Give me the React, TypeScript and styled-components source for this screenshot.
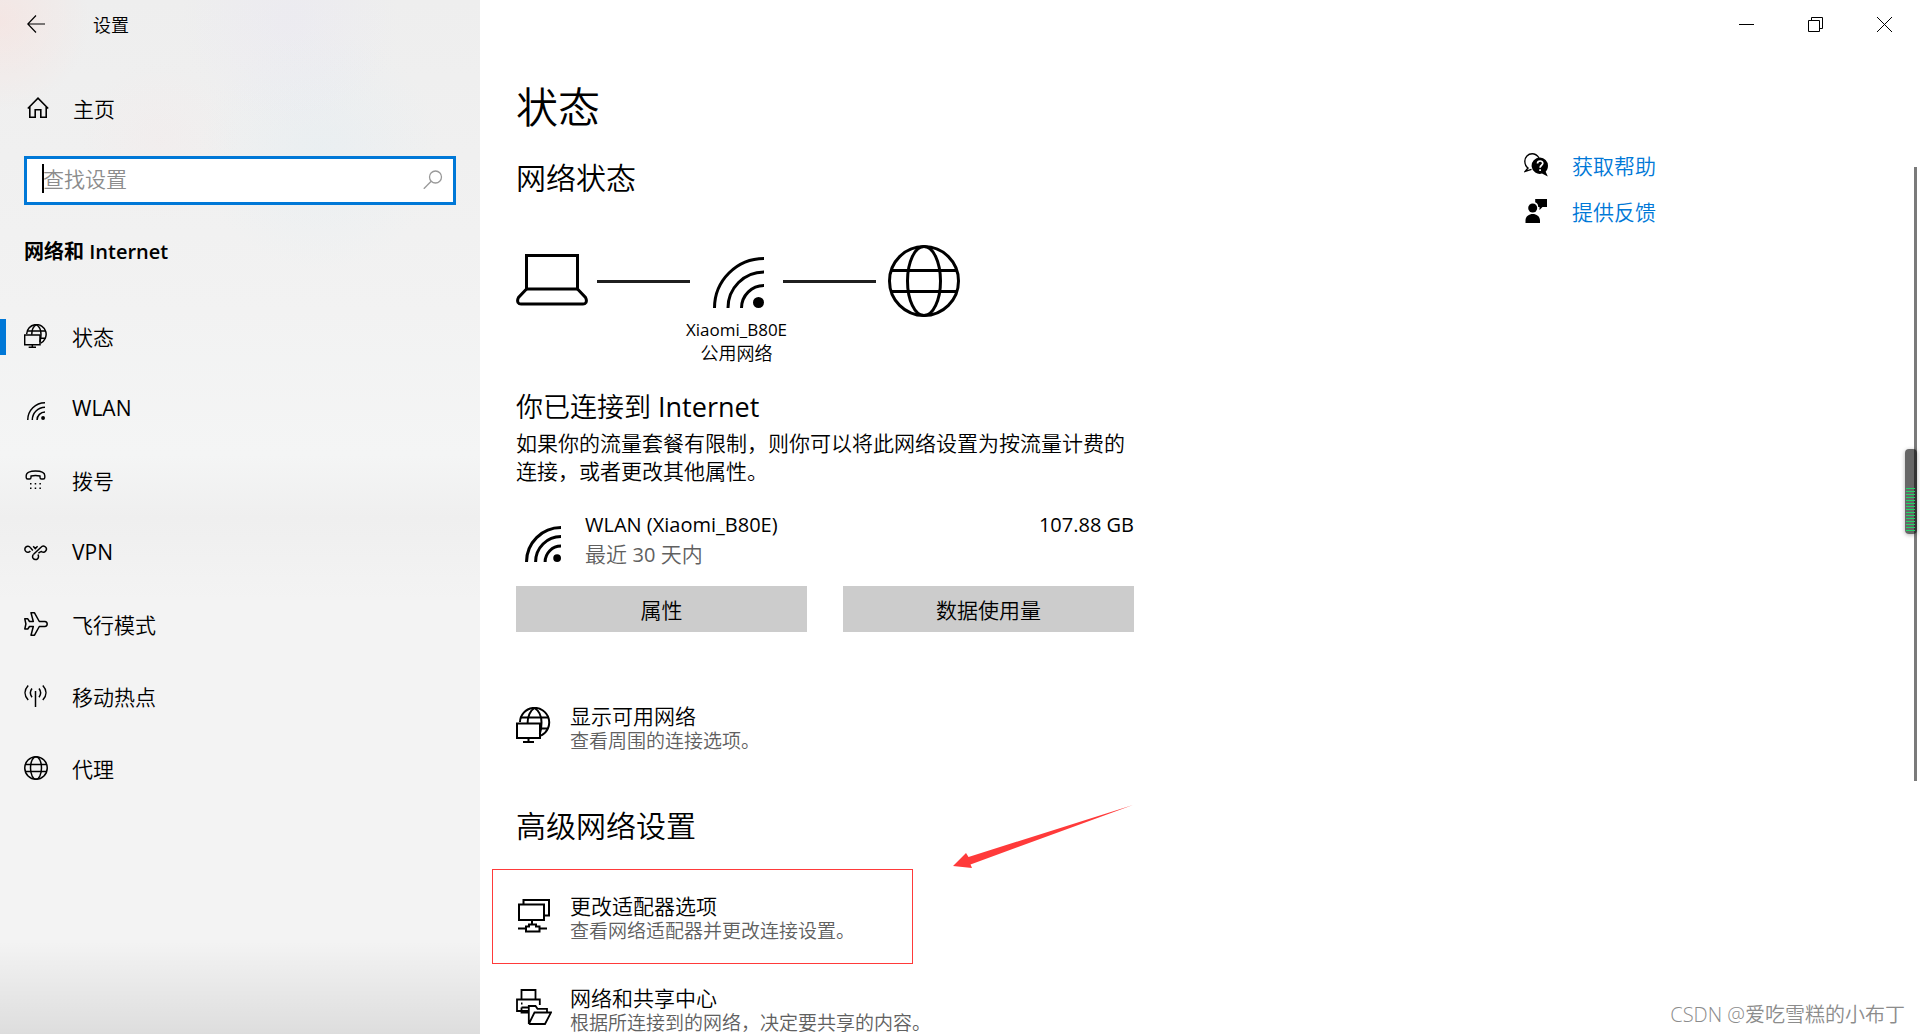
import React from "react";
import styled, { createGlobalStyle } from "styled-components";

const GlobalStyle = createGlobalStyle`
  *, *::before, *::after { box-sizing: border-box; }
  html, body, #root { height: 100%; }
  body {
    margin: 0;
    overflow: hidden;
    background: #fff;
    color: #000;
    font-family: "Open Sans", "Noto Sans CJK SC", sans-serif;
    font-size: 21px;
    font-weight: 350;
  }
  h1, h2, h3, p, ul { margin: 0; padding: 0; font-weight: inherit; }
  ul { list-style: none; }
  a { color: inherit; text-decoration: none; }
  button, input { font: inherit; color: inherit; border: 0; padding: 0; background: none; }
  svg { display: block; flex: none; }
`;

const accent = "#0078d7";
const muted = "#606060";

/* ---------- layout ---------- */

const Window = styled.div`
  position: relative;
  display: grid;
  grid-template-columns: 480px minmax(0, 1fr);
  height: 100vh;
  overflow: hidden;
`;

const Sidebar = styled.aside`
  display: flex;
  flex-direction: column;
  background:
    linear-gradient(to bottom, transparent 91%, rgba(0, 0, 0, 0.04) 95%, rgba(0, 0, 0, 0.09) 100%),
    radial-gradient(circle at 0 20px, rgba(255, 215, 208, 0.35), transparent 90px),
    radial-gradient(circle at 290px 20px, rgba(228, 224, 248, 0.22), transparent 110px),
    radial-gradient(circle at 320px 150px, rgba(220, 236, 244, 0.3), transparent 120px),
    radial-gradient(circle at 160px 140px, rgba(248, 228, 228, 0.2), transparent 80px),
    linear-gradient(to bottom, #eeeeee 0, #f2f2f2 30%, #f4f5f5 44%, #efefef 50%, #f3f3f3 58%, #f3f3f3 100%);
`;

const SideHeader = styled.header`
  display: flex;
  align-items: center;
  gap: 48px;
  height: 48px;
  padding-left: 27px;
  font-size: 18px;
`;

const IconButton = styled.button`
  display: flex;
  align-items: center;
  justify-content: center;
`;

const HomeLink = styled.a`
  display: flex;
  align-items: center;
  gap: 24px;
  height: 48px;
  margin-top: 36px;
  padding-left: 27px;
`;

const SearchBox = styled.label`
  position: relative;
  display: flex;
  align-items: center;
  height: 49px;
  margin: 24px 24px 0;
  padding: 0 10px 3px 16px;
  border: 3px solid ${accent};
  background: #fff;
`;

const SearchInput = styled.input`
  flex: 1;
  min-width: 0;
  outline: none;
  &::placeholder { color: #8c8c8c; opacity: 1; }
`;

const Caret = styled.span`
  position: absolute;
  left: 15px;
  top: 5px;
  width: 2px;
  height: 29px;
  background: #000;
`;

const GroupTitle = styled.h2`
  margin: 32px 24px 33px;
  font-weight: 600;
  font-size: 20px;
  line-height: 30px;
`;

const NavLink = styled.a<{ $active?: boolean }>`
  display: flex;
  align-items: center;
  gap: 24px;
  height: 72px;
  padding-left: 24px;
  background: ${(p) => (p.$active ? `linear-gradient(${accent}, ${accent}) 0 19px / 6px 36px no-repeat` : "none")};
`;

const NavIcon = styled.span`
  display: flex;
  align-items: flex-end;
  justify-content: center;
  width: 24px;
  height: 24px;
`;

/* Western text is set a step heavier than the Chinese text beside it. */
const Latin = styled.span<{ $size?: number }>`
  font-size: ${(p) => (p.$size ? `${p.$size}px` : "inherit")};
  font-weight: 400;
  line-height: 1;
`;

const Main = styled.main`
  min-width: 0;
  padding-left: 36px;
`;

const WindowButtons = styled.div`
  display: flex;
  justify-content: flex-end;
  height: 48px;
  padding-right: 1px;
  ${IconButton} { width: 69px; }
`;

const Columns = styled.div`
  display: grid;
  grid-template-columns: minmax(0, 1008px) 1fr;
`;

const Content = styled.div`
  max-width: 618px;
  padding-top: 31px;
`;

const PageTitle = styled.h1`
  font-size: 42px;
  line-height: 56px;
`;

const SectionTitle = styled.h2<{ $space: number }>`
  margin-top: ${(p) => p.$space}px;
  font-size: 30px;
  line-height: 40px;
`;

const Diagram = styled.div`
  display: grid;
  grid-template-columns: 81px 93px 93px 93px 84px;
  grid-template-rows: 72px 48px;
  align-items: center;
  margin-top: 47px;
`;

const Wire = styled.span`
  height: 3px;
  background: #1f1f1f;
`;

const DiagramEnd = styled.span`
  display: flex;
  justify-content: flex-end;
`;

const NodeIcon = styled.span`
  display: flex;
  justify-content: center;
  padding: 3px 0 0 4px;
`;

const NodeLabel = styled.p`
  grid-column: 3;
  justify-self: center;
  font-size: 18px;
  line-height: 24px;
  text-align: center;
  white-space: nowrap;
`;

const Connected = styled.h3`
  margin-top: 24px;
  font-size: 27px;
  line-height: 36px;
`;

const Note = styled.p`
  margin-top: 4px;
  line-height: 28px;
`;

const Usage = styled.div`
  display: flex;
  align-items: flex-end;
  margin-top: 24px;
  padding-left: 9px;
  line-height: 30px;
  > svg { margin-bottom: 7px; }
`;

const UsageText = styled.div`
  flex: 1;
  padding-left: 24px;
`;

const UsageAmount = styled.p`
  align-self: flex-start;
`;

const Muted = styled.p`
  color: ${muted};
`;

const Actions = styled.div`
  display: grid;
  grid-template-columns: 1fr 1fr;
  gap: 36px;
  margin-top: 17px;
`;

const ActionButton = styled.button`
  height: 46px;
  background: #ccc;
`;

const Option = styled.a<{ $space: number }>`
  position: relative;
  display: flex;
  gap: 18px;
  margin-top: ${(p) => p.$space}px;
  > svg { margin-top: 5px; }
`;

const OptionName = styled.p`
  line-height: 28px;
`;

const OptionHint = styled.p`
  color: ${muted};
  font-size: 19px;
  line-height: 22px;
  white-space: nowrap;
`;

const Highlight = styled.span`
  position: absolute;
  inset: -23px auto -22px -24px;
  width: 421px;
  border: 1px solid #ff3a3a;
`;

const Pointer = styled.svg`
  position: absolute;
  left: 437px;
  top: -92px;
`;

const Help = styled.nav`
  padding-top: 94px;
  color: ${accent};
`;

const HelpLink = styled.a`
  display: flex;
  align-items: center;
  gap: 24px;
  height: 46px;
  svg { color: #000; }
`;

const ScrollThumb = styled.span`
  position: absolute;
  top: 167px;
  right: 3px;
  width: 3px;
  height: 614px;
  background: #7a7a7a;
`;

const Meter = styled.span`
  position: absolute;
  top: 449px;
  right: 3px;
  width: 12px;
  height: 85px;
  padding: 39px 2px 3px 1px;
  border-radius: 4px;
  background: linear-gradient(to right, #666 9px, #333 9px);
  box-shadow: 0 1px 4px rgba(0, 0, 0, 0.3);
  &::after {
    content: "";
    display: block;
    height: 100%;
    background: repeating-linear-gradient(to bottom, #22d366 0 1px, transparent 1px 3px);
  }
`;

const Watermark = styled.span`
  position: absolute;
  right: 15px;
  bottom: 4px;
  color: #8c8c8c;
  font-size: 20px;
  line-height: 30px;
  text-shadow: 1px 1px 0 #fff;
`;

/* ---------- icons ---------- */

type Drawn = { size: number; stroke: number };

const Globe = ({ size, stroke }: Drawn) => {
  const r = 36 - (stroke * 36) / size;
  return (
    <svg width={size} height={size} viewBox="0 0 72 72" fill="none" stroke="currentColor" strokeWidth={(stroke * 72) / size}>
      <circle cx="36" cy="36" r={r} />
      <ellipse cx="36" cy="36" rx="16.5" ry={r} />
      <path d="M3 25.5H69M3 46.5H69" />
    </svg>
  );
};

const Wifi = ({ size, stroke }: Drawn) => {
  const w = (stroke * 51) / size;
  const o = 51 - w / 2;
  return (
    <svg width={size} height={size} viewBox="0 0 51 51" fill="none" stroke="currentColor" strokeWidth={w}>
      <path d={`M${51 - o} 51A${o} ${o} 0 0 1 51 ${51 - o}M15 51A36 36 0 0 1 51 15M28.5 51A22.5 22.5 0 0 1 51 28.5`} />
      <circle cx="45.5" cy="45.5" r="5.5" fill="currentColor" stroke="none" />
    </svg>
  );
};

const Status = ({ size, stroke }: Drawn) => (
  <svg width={size} height={size} viewBox="0 0 36 36" fill="none" stroke="currentColor" strokeWidth={(stroke * 36) / size}>
    <path d="M4 15A14.6 14.6 0 1 1 25 28.6" />
    <path d="M11.6 16C11.6 10 14 3.5 18.5 1C23.5 4 25.5 9.5 25.5 15.5C25.5 19.5 25 23.5 23.8 27" />
    <path d="M4.5 10.5H32.5M25 21.5H32" />
    <path d="M1 16.5H24V31H1ZM12.5 31V35M7 35H18" />
  </svg>
);

const Laptop = () => (
  <svg width="72" height="54" viewBox="0 0 72 54" fill="none" stroke="currentColor" strokeWidth="3">
    <path d="M10.5 35V1.5H61.5V35M9 35H63" />
    <path d="M10.5 35L2.5 43.5Q1 46 2 48.5Q3 50 5 50H67Q69 50 70 48.5Q71 46 69.5 43.5L61.5 35" />
  </svg>
);

const BackArrow = () => (
  <svg width="18" height="18" viewBox="0 0 18 18" fill="none" stroke="currentColor" strokeWidth="1.2">
    <path d="M18 9H1M9 0.5L0.8 9L9 17.5" />
  </svg>
);

const Home = () => (
  <svg width="22" height="22" viewBox="0 0 22 22" fill="none" stroke="currentColor" strokeWidth="1.6">
    <path d="M0.8 11.5L11 1.2L21.2 11.5M2.8 10V20.2H8.2V12.8H13.8V20.2H19.2V10" />
  </svg>
);

const Magnifier = () => (
  <svg width="20" height="20" viewBox="0 0 20 20" fill="none" stroke="#999" strokeWidth="1.3">
    <circle cx="12.5" cy="8" r="6" />
    <path d="M8.2 12.3L0.8 19.8" />
  </svg>
);

const DialUp = () => (
  <svg width="24" height="24" viewBox="0 0 24 24" fill="none" stroke="currentColor" strokeWidth="1.4">
    <path d="M2.2 9.5V7.8C2.2 4.6 6.5 3 11.5 3S20.8 4.6 20.8 7.8V9.5Q20.8 11 19.3 11H17.5Q16 11 16 9.5V8Q11.5 7 7 8V9.5Q7 11 5.5 11H3.7Q2.2 11 2.2 9.5Z" />
    <path d="M6 15.7H7.5M10.7 15.7H12.2M15.4 15.7H16.9M6 20.2H7.5M10.7 20.2H12.2M15.4 20.2H16.9" />
  </svg>
);

const Vpn = () => (
  <svg width="24" height="24" viewBox="0 0 24 24" fill="none" stroke="currentColor" strokeWidth="1.5">
    <path d="M9.6 14.3L17 7.2A3 3 0 1 1 17.5 11.5Q15.8 11.8 14.4 13.3M6.3 11A3 3 0 1 1 6.2 7.4L8.8 10.5" />
    <path d="M9.6 14.3A3 3 0 1 0 13.8 14.6M9.2 6.2L11.3 8.6L13.6 6.2" />
  </svg>
);

const Plane = () => (
  <svg width="24" height="24" viewBox="0 0 24 24" fill="none" stroke="currentColor" strokeWidth="1.5" strokeLinejoin="round">
    <path d="M7 0.8H10.5L15.3 9.5H20.8Q23.2 9.8 23.2 12T20.8 14.5H15.3L10.5 23.2H7L9.3 14.5H5.5L3.8 17H0.8L1.9 12L0.8 6.8H3.8L5.5 9.5H9.3Z" />
  </svg>
);

const Hotspot = () => (
  <svg width="24" height="24" viewBox="0 0 24 24" fill="none" stroke="currentColor" strokeWidth="1.5">
    <path d="M11.5 7V23M4.2 1.5C0 6 0 11.5 4.2 16M18.8 1.5C23 6 23 11.5 18.8 16M8 4.5C5.7 7.5 5.7 10.2 8 13.2M15 4.5C17.3 7.5 17.3 10.2 15 13.2" />
  </svg>
);

const Adapter = () => (
  <svg width="36" height="36" viewBox="0 0 36 36" fill="none" stroke="currentColor" strokeWidth="2">
    <path d="M3 7.5H28V23H3ZM7.5 7V3H33V18.5H29" />
    <path d="M16 23V28M2 31.5H10M23.5 31.5H31M10 29.5H13V27.5H20V29.5H23.5V34.5H10Z" />
  </svg>
);

const Sharing = () => (
  <svg width="36" height="36" viewBox="0 0 36 36" fill="none" stroke="currentColor" strokeWidth="1.8">
    <path d="M5.5 10.5V1H19.5V10.5M12 22H1V10.5H23.8V16" />
    <path d="M5 14.5H6.5M5.5 18.5H13M5.5 18.5V23.5H12" />
    <path d="M12.8 35V17H19.5L21.5 19.8H31V23.5M12.8 35H29L35 23.5H18.5L12.8 35" />
  </svg>
);

const GetHelp = () => (
  <svg width="24" height="24" viewBox="0 0 24 24">
    <path d="M15 4.8C13 2 10.5 0.8 8.2 0.8C4 0.8 0.8 4 0.8 8.2C0.8 11 2 13.5 4 15L1.2 18.3L7.5 16.3" fill="none" stroke="currentColor" strokeWidth="1.4" />
    <path d="M16 4.5A8.2 8.2 0 0 1 24 12.7C24 15.2 23 17.3 21.7 18.7L23.8 23.5L18 20.6A8.2 8.2 0 1 1 16 4.5Z" fill="currentColor" />
    <path d="M13.5 10.5C13.5 7.2 18.8 7.2 18.8 10.3C18.8 12.3 16.1 12.3 16.1 14.7M16.1 16.2V18" fill="none" stroke="#fff" strokeWidth="1.7" />
  </svg>
);

const Feedback = () => (
  <svg width="24" height="24" viewBox="0 0 24 24" fill="currentColor">
    <circle cx="8.7" cy="9" r="4.5" />
    <path d="M1.5 24V21.5C1.5 12.8 16 12.8 16 21.5V24ZM11.2 0H23V8H18.5L15.5 11V8H14.2C14.2 5.5 13.3 4.2 11.2 3.3Z" />
  </svg>
);

const Minimize = () => (
  <svg width="15" height="15" viewBox="0 0 15 15" stroke="currentColor"><path d="M0 7.5H15" /></svg>
);

const Restore = () => (
  <svg width="15" height="15" viewBox="0 0 15 15" fill="none" stroke="currentColor">
    <path d="M0.5 3.5H11.5V14.5H0.5ZM3.5 3.5V0.5H14.5V11.5H11.5" />
  </svg>
);

const Close = () => (
  <svg width="15" height="15" viewBox="0 0 15 15" stroke="currentColor"><path d="M0 0L15 15M15 0L0 15" /></svg>
);

/* ---------- page ---------- */

const navItems = [
  { name: "状态", icon: <Status size={24} stroke={1.5} />, active: true },
  { name: "WLAN", icon: <Wifi size={18} stroke={1.5} />, latin: true },
  { name: "拨号", icon: <DialUp /> },
  { name: "VPN", icon: <Vpn />, latin: true },
  { name: "飞行模式", icon: <Plane /> },
  { name: "移动热点", icon: <Hotspot /> },
  { name: "代理", icon: <Globe size={24} stroke={1.5} /> },
];

export default function App() {
  return (
    <>
      <GlobalStyle />
      <Window>
        <Sidebar>
          <SideHeader>
            <IconButton type="button" aria-label="返回"><BackArrow /></IconButton>
            <span>设置</span>
          </SideHeader>
          <HomeLink href="#home"><Home /><span>主页</span></HomeLink>
          <SearchBox>
            <SearchInput type="text" placeholder="查找设置" aria-label="查找设置" />
            <Caret />
            <Magnifier />
          </SearchBox>
          <GroupTitle>网络和 Internet</GroupTitle>
          <nav>
            <ul>
              {navItems.map((item) => (
                <li key={item.name}>
                  <NavLink href="#nav" $active={item.active}>
                    <NavIcon>{item.icon}</NavIcon>
                    <span>{item.latin ? <Latin>{item.name}</Latin> : item.name}</span>
                  </NavLink>
                </li>
              ))}
            </ul>
          </nav>
        </Sidebar>

        <Main>
          <WindowButtons>
            <IconButton type="button" aria-label="最小化"><Minimize /></IconButton>
            <IconButton type="button" aria-label="还原"><Restore /></IconButton>
            <IconButton type="button" aria-label="关闭"><Close /></IconButton>
          </WindowButtons>
          <Columns>
            <Content>
              <PageTitle>状态</PageTitle>
              <SectionTitle $space={23}>网络状态</SectionTitle>
              <Diagram>
                <Laptop />
                <Wire />
                <NodeIcon><Wifi size={51} stroke={3} /></NodeIcon>
                <Wire />
                <DiagramEnd><Globe size={72} stroke={3} /></DiagramEnd>
                <NodeLabel><Latin $size={17}>Xiaomi_B80E</Latin><br />公用网络</NodeLabel>
              </Diagram>
              <Connected>你已连接到 <Latin>Internet</Latin></Connected>
              <Note>如果你的流量套餐有限制，则你可以将此网络设置为按流量计费的连接，或者更改其他属性。</Note>
              <Usage>
                <Wifi size={36} stroke={3} />
                <UsageText>
                  <p><Latin $size={20}>WLAN (Xiaomi_B80E)</Latin></p>
                  <Muted>最近 <Latin $size={20}>30</Latin> 天内</Muted>
                </UsageText>
                <UsageAmount><Latin $size={20}>107.88 GB</Latin></UsageAmount>
              </Usage>
              <Actions>
                <ActionButton type="button">属性</ActionButton>
                <ActionButton type="button">数据使用量</ActionButton>
              </Actions>
              <Option href="#networks" $space={70}>
                <Status size={36} stroke={2} />
                <div>
                  <OptionName>显示可用网络</OptionName>
                  <OptionHint>查看周围的连接选项。</OptionHint>
                </div>
              </Option>
              <SectionTitle $space={54}>高级网络设置</SectionTitle>
              <Option href="#adapter" $space={46}>
                <Adapter />
                <div>
                  <OptionName>更改适配器选项</OptionName>
                  <OptionHint>查看网络适配器并更改连接设置。</OptionHint>
                </div>
                <Highlight />
                <Pointer width="180" height="64" viewBox="0 0 180 64" fill="#ff3a3a">
                  <path d="M0 61L13 48L15.5 52L180 0L17.5 59.5L19 63Z" />
                </Pointer>
              </Option>
              <Option href="#sharing" $space={42}>
                <Sharing />
                <div>
                  <OptionName>网络和共享中心</OptionName>
                  <OptionHint>根据所连接到的网络，决定要共享的内容。</OptionHint>
                </div>
              </Option>
            </Content>
            <Help>
              <HelpLink href="#help"><GetHelp /><span>获取帮助</span></HelpLink>
              <HelpLink href="#feedback"><Feedback /><span>提供反馈</span></HelpLink>
            </Help>
          </Columns>
        </Main>
        <ScrollThumb />
        <Meter />
        <Watermark>CSDN @爱吃雪糕的小布丁</Watermark>
      </Window>
    </>
  );
}
